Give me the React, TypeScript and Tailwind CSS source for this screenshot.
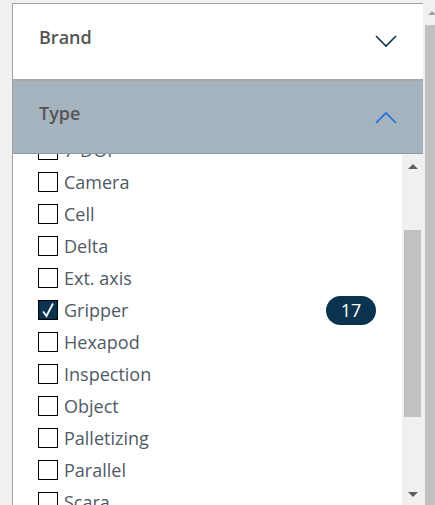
import React from 'react';

const ITEMS = [
  '7-DOF',
  'Camera',
  'Cell',
  'Delta',
  'Ext. axis',
  'Gripper',
  'Hexapod',
  'Inspection',
  'Object',
  'Palletizing',
  'Parallel',
  'Scara',
  'Six-axis',
];

function Chevron({ up, className }: { up?: boolean; className?: string }) {
  return (
    <svg width="22" height="13" viewBox="0 0 22 13" className={className} fill="none">
      <path
        d={up ? 'M1 12 L11 2 L21 12' : 'M1 1 L11 11 L21 1'}
        stroke="currentColor"
        strokeWidth="1.6"
      />
    </svg>
  );
}

function Checkbox({ checked }: { checked: boolean }) {
  if (checked) {
    return (
      <span className="w-[20px] h-[20px] shrink-0 bg-[#0a3350] border border-black flex items-center justify-center">
        <svg width="16" height="16" viewBox="0 0 16 16" fill="none">
          <path d="M3 9.5 L6.5 14 L13 1.5" stroke="white" strokeWidth="1.8" />
        </svg>
      </span>
    );
  }
  return <span className="w-[20px] h-[20px] shrink-0 bg-white border border-black" />;
}

export default function App() {
  return (
    <div className="w-[435px] h-[505px] bg-[#f0f0f0] flex overflow-hidden font-['Open_Sans',sans-serif]">
      {/* Filter panel */}
      <div className="flex-1 pl-[12px] pt-[3px] flex flex-col min-w-0">
        <div className="flex-1 flex flex-col border-l border-t border-[#a0a0a0] bg-white min-h-0">
          {/* Brand header */}
          <div className="h-[75px] flex items-center justify-between pl-[26px] pr-[26px] shrink-0">
            <span className="text-[18px] font-semibold text-[#555] pb-[8px]">Brand</span>
            <Chevron className="text-[#0d3552]" />
          </div>
          <div className="h-[2px] bg-[#a8a8a8] shrink-0" />

          {/* Type header */}
          <div className="h-[73px] bg-[#a5b3bf] flex items-center justify-between pl-[26px] pr-[26px] border-b border-[#8d99a4] shrink-0">
            <span className="text-[18px] font-semibold text-[#555] pb-[8px]">Type</span>
            <Chevron up className="text-[#1a6fe0]" />
          </div>

          {/* Options list */}
          <div className="flex-1 flex min-h-0 overflow-hidden">
            <div className="flex-1 overflow-hidden">
              <ul className="-mt-[20px] pl-[25px] pr-[26px]">
                {ITEMS.map((item) => (
                  <li key={item} className="h-[32px] flex items-center gap-[6px]">
                    <Checkbox checked={item === 'Gripper'} />
                    <span className="flex-1 text-[18px] text-[#4f5a66] leading-none">{item}</span>
                    {item === 'Gripper' && (
                      <span className="w-[50px] h-[29px] rounded-full bg-[#0a3350] text-white text-[18px] flex items-center justify-center">
                        17
                      </span>
                    )}
                  </li>
                ))}
              </ul>
            </div>

            {/* Inner scrollbar */}
            <div className="w-[21px] bg-[#f0f0f0] flex flex-col items-center">
              <div className="h-[24px] flex items-center justify-center">
                <div className="w-0 h-0 border-l-[5px] border-r-[5px] border-b-[5px] border-l-transparent border-r-transparent border-b-[#606060]" />
              </div>
              <div className="h-[52px]" />
              <div className="w-[17px] h-[187px] bg-[#c1c1c1]" />
              <div className="flex-1" />
              <div className="h-[22px] flex items-center justify-center">
                <div className="w-0 h-0 border-l-[5px] border-r-[5px] border-t-[5px] border-l-transparent border-r-transparent border-t-[#606060]" />
              </div>
            </div>
          </div>
        </div>
      </div>

      {/* Page scrollbar */}
      <div className="w-[12px] shrink-0 bg-[#f0f0f0] flex flex-col items-end">
        <div className="h-[25px] w-full flex items-center justify-end">
          <div className="w-0 h-0 border-l-[4px] border-r-[4px] border-b-[4px] border-l-transparent border-r-transparent border-b-[#a0a0a0] mr-[-1px]" />
        </div>
        <div className="flex-1 w-[10px] bg-[#c1c1c1]" />
      </div>
    </div>
  );
}
